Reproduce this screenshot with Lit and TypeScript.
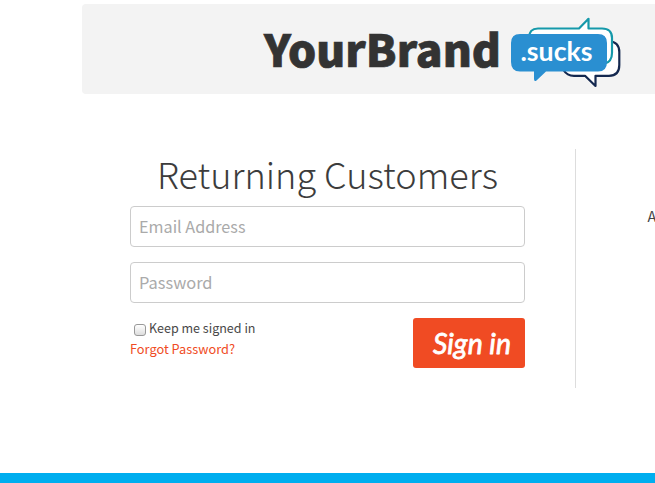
import { LitElement, html, css } from "lit";
import { customElement } from "lit/decorators.js";

@customElement("brand-banner")
class BrandBanner extends LitElement {
  static styles = css`
    :host { display: block; margin-left: 82px; height: 90px; background: #f3f3f3; border-radius: 4px 0 0 4px; overflow: hidden; }
    svg { display: block; }
    text { font-family: "Noto Sans CJK SC", "Noto Sans", sans-serif; }
    .brand { font-size: 44px; font-weight: 900; fill: #333; stroke: #333; stroke-width: 0.7; }
    .tld { font-family: Lato, sans-serif; font-size: 26px; font-weight: 700; fill: #fff; }
  `;
  render() {
    return html`
      <svg width="573" height="90" viewBox="82 4 573 90" role="img" aria-label="YourBrand.sucks">
        <text class="brand" x="264" y="67" textLength="237" lengthAdjust="spacingAndGlyphs">YourBrand</text>
        <path d="M574 41H609Q619.3 42 619.3 52V65Q619.3 75.8 609 75.8H595.5V86L585 75.8H574Q567 75.8 563.5 70Z" fill="#fff" stroke="#14284f" stroke-width="2.2" stroke-linejoin="round"/>
        <path d="M529 38Q529 28.5 538 28.5H579L588.5 18.8V28.5H602Q612 28.5 612 38V53Q612 62 604 64H529Z" fill="#fff" stroke="#1599aa" stroke-width="2.2" stroke-linejoin="round"/>
        <path d="M520 34H598Q607 34 607 43V62Q607 71.5 598 71.5H546L536.5 80.5Q534 82 534 79V71.5H520Q511 71.5 511 62V43Q511 34 520 34Z" fill="#2a8fd1"/>
        <text class="tld" x="520.5" y="61" textLength="72" lengthAdjust="spacingAndGlyphs">.sucks</text>
      </svg>`;
  }
}

@customElement("sign-in-form")
class SignInForm extends LitElement {
  static styles = css`
    :host { display: block; width: 395px; font-family: "Noto Sans CJK SC", "Noto Sans", sans-serif; color: #444; }
    svg { display: block; overflow: visible; }
    svg text { font-family: "Noto Sans CJK SC", "Noto Sans", sans-serif; }
    .title { margin: 0; height: 56px; }
    .title text { font-size: 36px; font-weight: 300; fill: #3c3c3c; }
    .field { box-sizing: border-box; width: 395px; height: 41px; border: 1px solid #ccc; border-radius: 4px; background: #fff; margin-bottom: 15px; }
    .field text { font-size: 16.3px; fill: #aaa; }
    .bottom { display: flex; justify-content: space-between; }
    .options text { font-size: 12.7px; fill: #484848; }
    .options .link { fill: #f04b23; }
    .row { display: flex; height: 21px; }
    .box { box-sizing: border-box; width: 12px; height: 12px; margin: 6px 3px 0 4px; border: 1px solid #999; border-radius: 3px; background: linear-gradient(#fff, #ddd); }
    .button { width: 112px; height: 50px; padding: 0; border: 0; border-radius: 3px; background: #f04b23; }
    .button text { font-family: Lato, cursive; font-size: 29px; font-weight: 400; font-style: italic; fill: #fff; stroke: #fff; stroke-width: 0.8; stroke-linejoin: round; }
  `;
  render() {
    return html`
      <h1 class="title"><svg width="395" height="56"><text x="27" y="38.5" textLength="341" lengthAdjust="spacingAndGlyphs">Returning Customers</text></svg></h1>
      <div class="field"><svg width="393" height="39"><text x="8" y="26" textLength="106.5" lengthAdjust="spacingAndGlyphs">Email Address</text></svg></div>
      <div class="field"><svg width="393" height="39"><text x="8" y="26" textLength="73.5" lengthAdjust="spacingAndGlyphs">Password</text></svg></div>
      <div class="bottom">
        <div class="options">
          <div class="row"><span class="box"></span><svg width="110" height="21"><text x="0" y="15" textLength="106.5" lengthAdjust="spacingAndGlyphs">Keep me signed in</text></svg></div>
          <div class="row"><svg width="110" height="21"><text class="link" x="0" y="15" textLength="105" lengthAdjust="spacingAndGlyphs">Forgot Password?</text></svg></div>
        </div>
        <button class="button"><svg width="112" height="50"><text x="20" y="36" textLength="78" lengthAdjust="spacingAndGlyphs">Sign in</text></svg></button>
      </div>`;
  }
}

@customElement("app-root")
class AppRoot extends LitElement {
  static styles = css`
    :host { display: flex; flex-direction: column; box-sizing: border-box; height: 483px; padding-top: 4px; background: #fff; overflow: hidden; }
    .content { flex: 1; display: flex; padding: 55px 0 0 130px; }
    .aside { box-sizing: border-box; width: 80px; flex: none; height: 239px; margin: 0 0 0 50px; border-left: 1px solid #ddd; padding: 57px 0 0 71.5px; font: 14.5px/20px "Noto Sans CJK SC", "Noto Sans", sans-serif; color: #444; }
    .form { padding-top: 1px; flex: none; }
    .footer { height: 10px; background: #00aeef; }
  `;
  render() {
    return html`
      <brand-banner></brand-banner>
      <main class="content">
        <sign-in-form class="form"></sign-in-form>
        <div class="aside">A</div>
      </main>
      <footer class="footer"></footer>`;
  }
}
